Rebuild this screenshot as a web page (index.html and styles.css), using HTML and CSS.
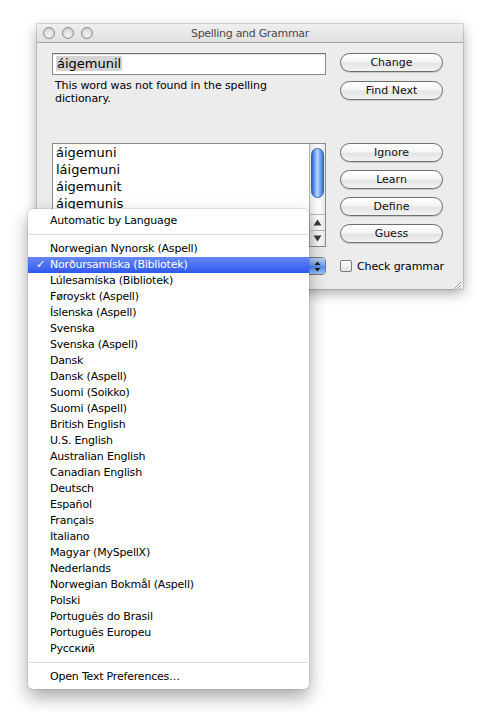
FILE: index.html
```html
<!DOCTYPE html>
<html>
<head>
<meta charset="utf-8">
<link rel="stylesheet" href="styles.css">
</head>
<body>
<div class="page">
  <div class="window">
    <div class="titlebar">
      <div class="lights"><span class="light"></span><span class="light"></span><span class="light"></span></div>
      <div class="title">Spelling and Grammar</div>
    </div>
    <div class="content">
      <div class="row top">
        <div class="left">
          <div class="field"><span class="sel">áigemunil</span></div>
          <p class="msg">This word was not found in the spelling dictionary.</p>
        </div>
        <div class="buttons">
          <button class="btn">Change</button>
          <button class="btn">Find Next</button>
        </div>
      </div>
      <div class="row mid">
        <div class="list">
          <ul class="items">
            <li>áigemuni</li>
            <li>láigemuni</li>
            <li>áigemunit</li>
            <li>áigemunis</li>
          </ul>
          <div class="scrollbar">
            <div class="track"><div class="thumb"></div></div>
            <div class="arrow"><svg width="9" height="7" viewBox="0 0 9 7"><polygon points="4.5,0.5 8.5,6.5 0.5,6.5" fill="#3a3a3a"/></svg></div>
            <div class="arrow"><svg width="9" height="7" viewBox="0 0 9 7"><polygon points="0.5,0.5 8.5,0.5 4.5,6.5" fill="#3a3a3a"/></svg></div>
          </div>
        </div>
        <div class="buttons">
          <button class="btn">Ignore</button>
          <button class="btn">Learn</button>
          <button class="btn">Define</button>
          <button class="btn">Guess</button>
        </div>
      </div>
      <div class="row bottom">
        <div class="popup">
          <span class="stepper"><svg width="7" height="11" viewBox="0 0 7 11"><polygon points="3.5,0.5 6.5,4 0.5,4" fill="#1b1b1b"/><polygon points="0.5,7 6.5,7 3.5,10.5" fill="#1b1b1b"/></svg></span>
        </div>
        <label class="check"><span class="box"></span>Check grammar</label>
      </div>
    </div>
    <div class="grip"><svg width="12" height="12" viewBox="0 0 12 12"><path d="M11 3 L3 11 M11 6 L6 11 M11 9 L9 11" stroke="#9a9a9a" stroke-width="1"/><path d="M11 4 L4 11 M11 7 L7 11 M11 10 L10 11" stroke="#ffffff" stroke-width="1"/></svg></div>
  </div>

  <div class="menu">
    <div class="mi">Automatic by Language</div>
    <div class="sep"></div>
    <div class="mi">Norwegian Nynorsk (Aspell)</div>
    <div class="mi selected"><span class="tick">✓</span>Norðursamíska (Bibliotek)</div>
    <div class="mi">Lúlesamíska (Bibliotek)</div>
    <div class="mi">Føroyskt (Aspell)</div>
    <div class="mi">Íslenska (Aspell)</div>
    <div class="mi">Svenska</div>
    <div class="mi">Svenska (Aspell)</div>
    <div class="mi">Dansk</div>
    <div class="mi">Dansk (Aspell)</div>
    <div class="mi">Suomi (Soikko)</div>
    <div class="mi">Suomi (Aspell)</div>
    <div class="mi">British English</div>
    <div class="mi">U.S. English</div>
    <div class="mi">Australian English</div>
    <div class="mi">Canadian English</div>
    <div class="mi">Deutsch</div>
    <div class="mi">Español</div>
    <div class="mi">Français</div>
    <div class="mi">Italiano</div>
    <div class="mi">Magyar (MySpellX)</div>
    <div class="mi">Nederlands</div>
    <div class="mi">Norwegian Bokmål (Aspell)</div>
    <div class="mi">Polski</div>
    <div class="mi">Português do Brasil</div>
    <div class="mi">Português Europeu</div>
    <div class="mi">Русский</div>
    <div class="sep"></div>
    <div class="mi">Open Text Preferences…</div>
  </div>
</div>
</body>
</html>
```

FILE: styles.css
```css
* { box-sizing: border-box; }
html, body { margin: 0; padding: 0; background: #ffffff; }
body { font-family: "DejaVu Sans", "Noto Sans", sans-serif; color: #000; }

.page {
  position: relative;
  width: 497px;
  height: 712px;
  padding: 24px 0 0 37px;
}

.window {
  position: relative;
  width: 426px;
  height: 265px;
  background: #ececec;
  box-shadow: 0 0 0 1px rgba(0,0,0,0.12), 0 4px 12px rgba(0,0,0,0.35);
  display: flex;
  flex-direction: column;
}

.titlebar {
  position: relative;
  height: 19px;
  background: linear-gradient(#efefef, #e0e0e0);
  border-bottom: 1px solid #a6a6a6;
  display: flex;
  align-items: center;
  flex-shrink: 0;
}
.lights { display: flex; gap: 7px; padding-left: 6px; }
.light {
  width: 12px; height: 12px; border-radius: 50%;
  background: radial-gradient(circle at 50% 70%, #f4f4f4 0%, #d6d6d6 70%, #bdbdbd 100%);
  border: 1px solid #8e8e8e;
}
.title {
  position: absolute; left: 0; right: 0; top: 0; bottom: 0;
  text-align: center;
  font-size: 11px;
  line-height: 19px;
  letter-spacing: -0.3px;
  color: #4a4a4a;
}

.content {
  padding: 10px 20px 0 15px;
  display: flex;
  flex-direction: column;
}
.row { display: flex; gap: 14px; }
.top { height: 90px; }
.mid { height: 113px; }
.bottom { height: 20px; align-items: center; }

.left { width: 274px; }
.field {
  height: 22px;
  background: #fff;
  border: 1px solid #8a8a8a;
  border-top-color: #6f6f6f;
  box-shadow: inset 0 1px 1px rgba(0,0,0,0.12);
  padding: 2px 3px;
  font-size: 13px;
  line-height: 16px;
}
.sel { background: #d4d4d4; padding: 0 1px; }
.msg {
  margin: 4px 0 0 3px;
  width: 240px;
  font-size: 11px;
  line-height: 13px;
  letter-spacing: -0.1px;
}

.buttons {
  width: 103px;
  display: flex;
  flex-direction: column;
  gap: 8px;
}
.top .buttons { gap: 9px; }
.btn {
  height: 19px;
  width: 103px;
  padding: 0;
  border: 1px solid #6e6e6e;
  border-radius: 10px;
  background: linear-gradient(#ffffff 0%, #f6f6f6 45%, #e4e4e4 55%, #f2f2f2 100%);
  box-shadow: 0 1px 1px rgba(0,0,0,0.15);
  font-family: "DejaVu Sans", sans-serif;
  font-size: 11px;
  line-height: 17px;
  color: #111;
  text-align: center;
}

.list {
  width: 274px;
  height: 104px;
  background: #fff;
  border: 1px solid #8a8a8a;
  display: flex;
}
.items {
  list-style: none;
  margin: 0;
  padding: 0 0 0 3px;
  flex: 1;
  overflow: hidden;
  font-size: 13px;
  line-height: 17px;
}
.scrollbar {
  width: 16px;
  border-left: 1px solid #b4b4b4;
  background: linear-gradient(90deg, #e4e4e4, #f8f8f8 40%, #ffffff 60%, #e8e8e8);
  display: flex;
  flex-direction: column;
}
.track { flex: 1; padding: 4px 1px 0 1px; }
.thumb {
  height: 50px;
  border-radius: 7px;
  border: 1px solid #3461b5;
  background: linear-gradient(90deg, #2d62d0 0%, #7fb0f5 30%, #b7d6fb 50%, #7fb0f5 70%, #3a70d8 100%);
}
.arrow {
  height: 16px;
  border-top: 1px solid #b8b8b8;
  display: flex;
  align-items: center;
  justify-content: center;
}

.popup {
  width: 274px;
  height: 18px;
  flex-shrink: 0;
  border: 1px solid #7a7a7a;
  border-radius: 4px;
  background: linear-gradient(#ffffff, #e9e9e9);
  display: flex;
  align-items: center;
  justify-content: flex-end;
  overflow: hidden;
}
.stepper {
  width: 17px; height: 100%;
  background: linear-gradient(#b9d5fb, #6aa2ef 50%, #4b8ae8 51%, #9cc7fa);
  border-left: 1px solid #5a7fb8;
  display: flex; align-items: center; justify-content: center;
}
.check {
  display: flex;
  align-items: center;
  gap: 5px;
  font-size: 11px;
  white-space: nowrap;
  flex-shrink: 0;
  letter-spacing: -0.1px;
}
.box {
  width: 12px; height: 12px;
  flex-shrink: 0;
  border: 1px solid #7d7d7d;
  border-radius: 2px;
  background: linear-gradient(#fefefe, #e3e3e3);
}
.grip {
  position: absolute;
  right: 1px;
  bottom: 1px;
  width: 12px;
  height: 12px;
}

.menu {
  position: absolute;
  left: 28px;
  top: 209px;
  width: 281px;
  padding: 4px 0;
  background: #ffffff;
  border-radius: 5px;
  box-shadow: 0 0 0 1px rgba(0,0,0,0.08), 0 8px 18px rgba(0,0,0,0.35);
  font-size: 11px;
  letter-spacing: -0.2px;
}
.mi {
  position: relative;
  height: 16px;
  line-height: 16px;
  padding-left: 22px;
  color: #000;
  white-space: nowrap;
}
.mi.selected {
  background: linear-gradient(#6787f7, #2f58ee);
  color: #fff;
}
.tick {
  position: absolute;
  left: 8px;
  top: 0;
  font-size: 11px;
  font-weight: bold;
}
.sep {
  height: 12px;
  position: relative;
}
.sep::after {
  content: "";
  position: absolute;
  left: 1px; right: 1px; top: 5px;
  height: 1px;
  background: #dadada;
}
```
